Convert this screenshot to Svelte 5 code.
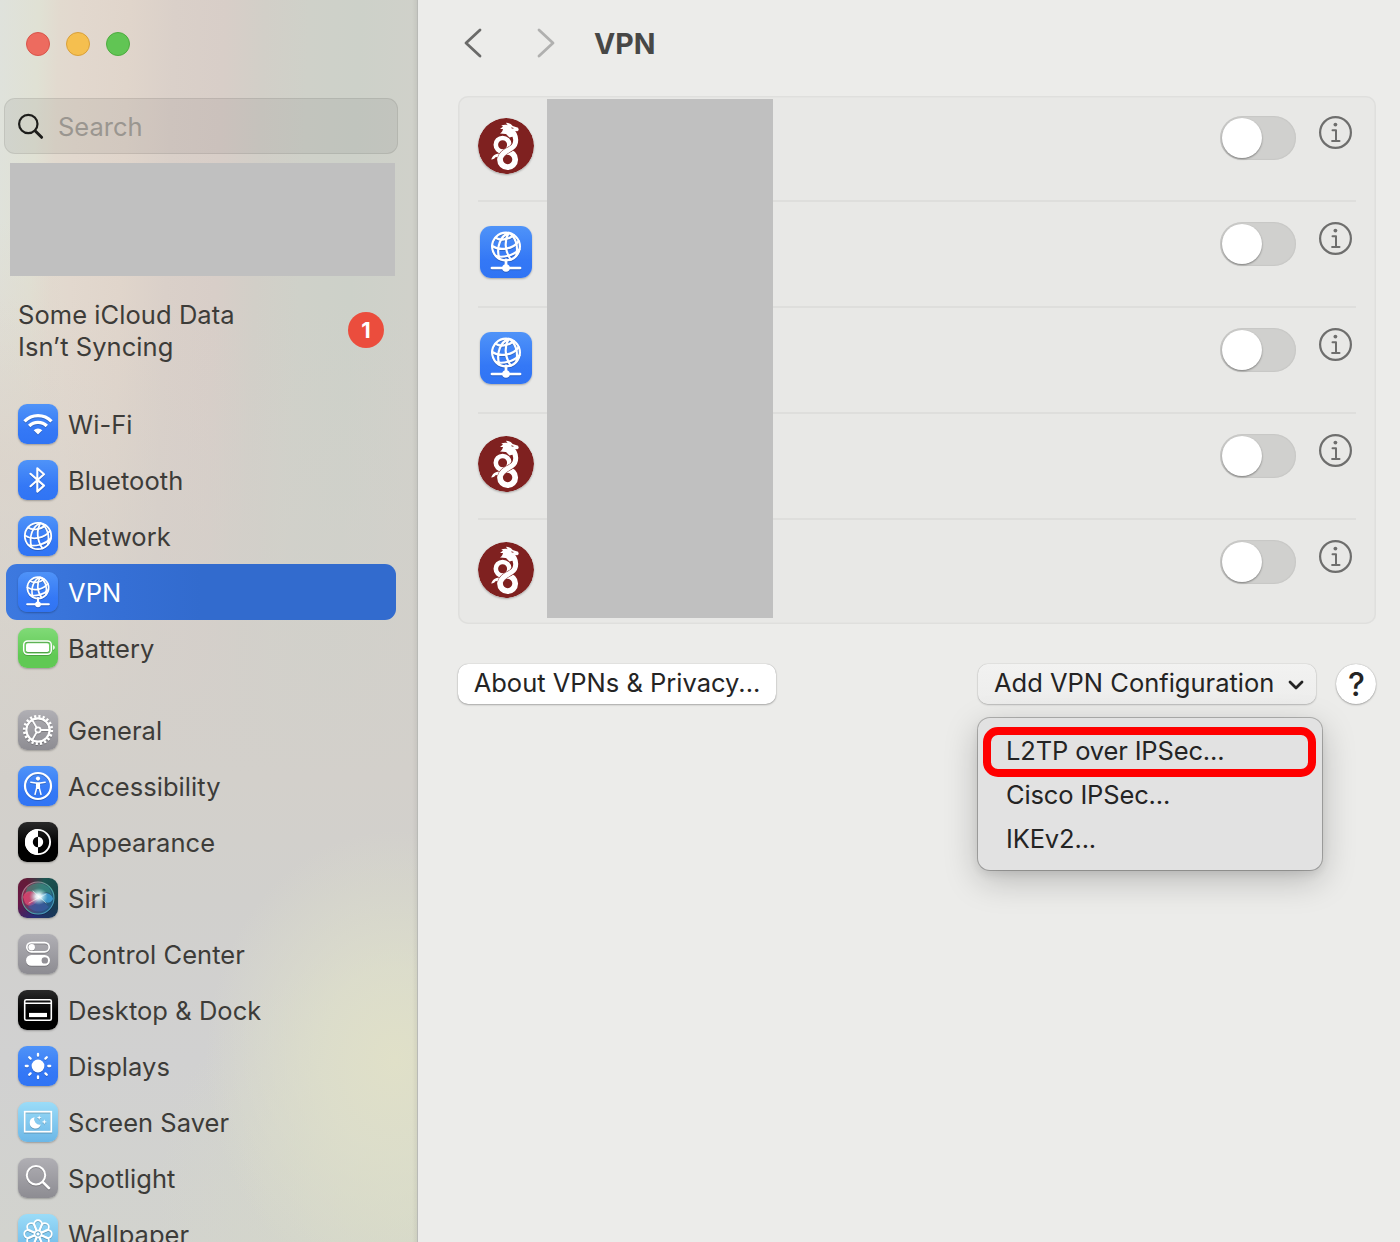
<script>
  const groups = [
    [
      { id: 'wifi', label: 'Wi-Fi', tone: 'blue' },
      { id: 'bluetooth', label: 'Bluetooth', tone: 'blue' },
      { id: 'network', label: 'Network', tone: 'blue' },
      { id: 'vpn', label: 'VPN', tone: 'blue' },
      { id: 'battery', label: 'Battery', tone: 'green' }
    ],
    [
      { id: 'general', label: 'General', tone: 'gray' },
      { id: 'accessibility', label: 'Accessibility', tone: 'blue' },
      { id: 'appearance', label: 'Appearance', tone: 'black' },
      { id: 'siri', label: 'Siri', tone: 'siri' },
      { id: 'control', label: 'Control Center', tone: 'gray' },
      { id: 'desktop', label: 'Desktop & Dock', tone: 'black' },
      { id: 'displays', label: 'Displays', tone: 'blue' },
      { id: 'saver', label: 'Screen Saver', tone: 'sky' },
      { id: 'spotlight', label: 'Spotlight', tone: 'gray' },
      { id: 'wallpaper', label: 'Wallpaper', tone: 'sky' }
    ]
  ];
  let selected = $state('vpn');
  let connections = $state([
    { kind: 'wireguard', on: false },
    { kind: 'vpn', on: false },
    { kind: 'vpn', on: false },
    { kind: 'wireguard', on: false },
    { kind: 'wireguard', on: false }
  ]);
  const options = ['L2TP over IPSec...', 'Cisco IPSec...', 'IKEv2...'];
  const petals = [0, 45, 90, 135, 180, 225, 270, 315];
</script>

{#snippet globe()}
  <circle cx="20" cy="20" r="13.2" />
  <path d="M22.5 7C15 10 10.5 20 13.5 31.2M22.5 7C18.5 14 18.5 24 24.5 32.4M22.5 7C28.5 10 32 19 29.8 28.6" />
  <path d="M10 11.5C14 14.5 22 14 27.5 9.2M6.9 19.5C14 24.5 27 22.5 32 14.8M10.5 29C17 31 27 28.5 32.8 22.5" />
{/snippet}

{#snippet vpnGlyph()}
  <g fill="none" stroke="#fff" stroke-width="2.1" transform="translate(3.8 -.4) scale(.81)">{@render globe()}</g>
  <path d="M20 26v5M9.2 32.3h21.6" fill="none" stroke="#fff" stroke-width="2.1" stroke-linecap="round" />
  <circle cx="20" cy="32.3" r="2.9" fill="#fff" stroke="none" />
{/snippet}

{#snippet glyph(id)}
  <svg viewBox="0 0 40 40" fill="none" stroke="#fff" stroke-linecap="round" stroke-linejoin="round" aria-hidden="true">
    {#if id === 'wifi'}
      <g stroke-width="3.3" stroke-linecap="butt">
        <path d="M6.5 17.3a19 19 0 0 1 27 0M11.2 22a12.3 12.3 0 0 1 17.6 0" />
      </g>
      <path d="M20 30.5l-4.3-4.3a6 6 0 0 1 8.6 0z" fill="#fff" stroke="none" />
    {:else if id === 'bluetooth'}
      <path d="M12.5 13.8L26 25.6 19.3 31.6V8.3L26 14.3 12.5 26.2" stroke-width="2.1" />
    {:else if id === 'network'}
      <g stroke-width="1.8">{@render globe()}</g>
    {:else if id === 'vpn'}
      {@render vpnGlyph()}
    {:else if id === 'battery'}
      <rect x="5.7" y="12.9" width="27.6" height="13.4" rx="4" stroke-width="1.5" />
      <rect x="8" y="15.2" width="23" height="8.8" rx="1.8" fill="#fff" stroke="none" />
      <path d="M35.1 17.3c2.2.6 2.2 4 0 4.6z" fill="#fff" stroke="none" />
    {:else if id === 'general'}
      <circle cx="20" cy="20" r="13.7" stroke-width="2.8" stroke-linecap="butt" stroke-dasharray="2.2 2.1" />
      <circle cx="20" cy="20" r="11.6" stroke-width="2.1" />
      <circle cx="20" cy="20" r="2.6" stroke-width="1.7" />
      <path d="M22.8 20H32M18.6 17.6L14 9.600M18.6 22.4L14 30.4" stroke-width="1.9" />
    {:else if id === 'accessibility'}
      <circle cx="20" cy="20" r="13" stroke-width="2.2" />
      <circle cx="20" cy="12.6" r="2.1" fill="#fff" stroke="none" />
      <path d="M12.8 16.2l5 .8h4.4l5-.8M18.7 17.5v4.5l-1.7 6.5M21.3 17.5v4.5l1.7 6.5" stroke-width="1.5" />
      <path d="M18 17h4v6h-4z" fill="#fff" stroke="none" />
    {:else if id === 'appearance'}
      <circle cx="20" cy="20" r="12.1" stroke-width="1.9" />
      <path d="M20 7a13 13 0 0 0 0 26v-7.8a5.2 5.2 0 0 1 0-10.4zM20 14.8a5.2 5.2 0 0 1 0 10.4z" fill="#fff" stroke="none" />
    {:else if id === 'siri'}
      <defs>
        <radialGradient id="siri-core"><stop offset="0" stop-color="#fff" /><stop offset=".3" stop-color="#e8fbff" stop-opacity=".9" /><stop offset="1" stop-color="#9fdcdf" stop-opacity="0" /></radialGradient>
        <linearGradient id="siri-orb" x1="0" y1=".3" x2="1" y2=".6"><stop offset="0" stop-color="#d3305c" /><stop offset=".45" stop-color="#66728d" /><stop offset="1" stop-color="#2680c2" /></linearGradient>
        <linearGradient id="siri-rim" x1="0" y1="0" x2="1" y2="1"><stop offset="0" stop-color="#cb6686" /><stop offset=".5" stop-color="#4fae9b" /><stop offset="1" stop-color="#448fca" /></linearGradient>
      </defs>
      <circle cx="20" cy="20" r="16" fill="url(#siri-orb)" fill-opacity=".5" stroke="url(#siri-rim)" stroke-width="1.1" />
      <g stroke="none">
        <path d="M9 9.5Q20 1 31 9.5L34 17Q27 10 20 19Q14 10 7 17z" fill="#359b83" opacity=".55" />
        <path d="M5 19C8 11 15 12 22 19 18 26 12 31 7 25z" fill="#ec4a76" opacity=".7" />
        <path d="M21 19C27 12 34 16 35 21 31 28 25 24 21 19z" fill="#40a4dc" opacity=".8" />
        <path d="M10 29Q17 21 22 21L31 29Q21 38 10 29z" fill="#4060b4" opacity=".5" />
        <ellipse cx="20.5" cy="18.500" rx="9.5" ry="8.5" fill="url(#siri-core)" />
      </g>
      <path d="M15 13l13 12M11 25l17-9" stroke="#fff" stroke-opacity=".55" stroke-width=".9" />
    {:else if id === 'control'}
      <rect x="8.8" y="8.6" width="22.4" height="9.2" rx="4.6" stroke-width="1.7" />
      <circle cx="13.7" cy="13.2" r="3.2" fill="#fff" stroke="none" />
      <rect x="8" y="21" width="24" height="10.8" rx="5.4" fill="#fff" stroke="none" />
      <circle cx="26.8" cy="26.4" r="3.2" fill="#929096" stroke="none" />
    {:else if id === 'desktop'}
      <rect x="6.7" y="9.7" width="26.6" height="20.6" rx="1.6" stroke-width="1.6" />
      <path d="M7 13.2h26" stroke-width="1.4" />
      <path d="M11 22.9h18v4.2H11z" fill="#fff" stroke="none" />
    {:else if id === 'displays'}
      <circle cx="20" cy="20" r="6.4" fill="#fff" stroke="none" />
      <path d="M20 7.8v1.9M20 30.3v1.9M7.8 20h1.9M30.3 20h1.9M11.2 11.2l1.4 1.4M27.4 27.4l1.4 1.4M11.2 28.8l1.4-1.4M27.4 12.6l1.4-1.4" stroke-width="2.3" />
    {:else if id === 'saver'}
      <rect x="6.7" y="9.7" width="26.6" height="20" stroke-width="1.7" stroke-linejoin="miter" />
      <path d="M16.5 15.2a5.7 5.7 0 1 0 6.3 7.4 5.6 5.6 0 0 1-6.3-7.4z" fill="#fff" stroke="none" />
      <path d="M21.2 13.3l.6 1.8 1.8.6-1.8.6-.6 1.8-.6-1.8-1.8-.6 1.8-.6zM26.3 17.2l.7 2 2 .7-2 .7-.7 2-.7-2-2-.7 2-.7z" fill="#fff" stroke="none" />
    {:else if id === 'spotlight'}
      <circle cx="18" cy="17.2" r="9.2" stroke-width="2" />
      <path d="M24.9 24.1l6 6" stroke-width="2.6" />
    {:else if id === 'wallpaper'}
      {#each petals as angle}
        <path d="M18.9 16.6L17 12.9A4 4 0 1 1 23 12.9L21.1 16.6" transform="rotate({angle} 20 20)" stroke-width="1.8" />
      {/each}
      <circle cx="20" cy="20" r="3.6" stroke-width="1.3" />
      <circle cx="20" cy="20" r="1.5" fill="#fff" stroke="none" />
    {/if}
  </svg>
{/snippet}

<div class="window">
  <aside>
    <div class="lights"><i class="close"></i><i class="minimize"></i><i class="zoom"></i></div>
    <label class="search">
      <svg viewBox="0 0 28 28" fill="none" stroke="#1d1d1b" stroke-linecap="round"><circle cx="11.3" cy="11" r="9.2" stroke-width="2.2" /><path d="M18.3 18l6.3 6.3" stroke-width="3" /></svg>
      <span>Search</span>
    </label>
    <div class="account"></div>
    <div class="notice"><p>Some iCloud Data<br />Isn’t Syncing</p><b>1</b></div>
    <nav>
      {#each groups as group}
        <ul>
          {#each group as item}
            <li>
              <button class="item" class:selected={selected === item.id} onclick={() => (selected = item.id)}>
                <span class="tile {item.tone}">{@render glyph(item.id)}</span>
                <span>{item.label}</span>
              </button>
            </li>
          {/each}
        </ul>
      {/each}
    </nav>
  </aside>

  <main>
    <header>
      <svg class="back" viewBox="0 0 18 30"><path d="M16 2L2 15l14 13" /></svg>
      <svg class="forward" viewBox="0 0 18 30"><path d="M2 2l14 13L2 28" /></svg>
      <h1>VPN</h1>
    </header>

    <section class="panel">
      {#each connections as c}
        <div class="row">
          {#if c.kind === 'vpn'}
            <span class="service tile blue">{@render glyph('vpn')}</span>
          {:else}
            <svg class="wireguard" viewBox="0 0 56 56">
              <circle cx="28" cy="28" r="28" fill="#7f2120" />
              <g fill="none">
                <circle cx="24.6" cy="26.8" r="6.8" stroke="#fff" stroke-width="4.6" />
                <circle cx="29.6" cy="41.5" r="7.6" stroke="#fff" stroke-width="5.8" />
                <path d="M32 11.5C39.5 18 39.2 26.5 33.4 30.2 28.800 33.200 23.800 34.500 22.200 40" stroke="#7f2120" stroke-width="6" />
                <path d="M32 11C39.500 17.500 39.200 26.500 33.400 30.200 28.800 33.200 23.600 34.500 22 41" stroke="#fff" stroke-width="5" />
              </g>
              <path d="M22 15.500c2-1.200 2.600-2.600 3-4.400l-3-.1 3-2.400-1.800-1c2.500-.9 4.700-.9 6.500-.4l-1.800-2.400c3 .1 5.300 1.200 6.800 3.300l5.400 1.700.7 2.200-1.400 1.200-5-.5-.7 1.200 3.300 4-5.500 1.500-3.500-3.400c-2 .1-4.200-.6-6-.5z" fill="#fff" />
              <path d="M13.200 41.500c1.700-4.200 4.200-5.600 7.800-5.900l-1.500 3.600-1.800-.3c-.8 1.500-2.200 2.400-4.500 2.600z" fill="#fff" />
              <path d="M33.400 9.800l2 .6" stroke="#7f2120" stroke-width=".9" />
            </svg>
          {/if}
          <button class="switch" class:on={c.on} aria-label="Toggle connection" onclick={() => (c.on = !c.on)}><i></i></button>
          <svg class="info" viewBox="0 0 34 34" fill="none" stroke="#6e6e6d">
            <circle cx="16.5" cy="16.5" r="15.4" stroke-width="2.2" />
            <circle cx="16.4" cy="8.6" r="1.9" fill="#6e6e6d" stroke="none" />
            <path d="M13.5 14.2h3.5v10.8M13.1 25h7.4" stroke-width="2" stroke-linecap="round" stroke-linejoin="round" />
          </svg>
        </div>
      {/each}
      <div class="redacted"></div>
    </section>

    <div class="actions">
      <button class="about">About VPNs &amp; Privacy...</button>
      <div class="add-wrap">
        <button class="add">Add VPN Configuration
          <svg viewBox="0 0 16 10"><path d="M2 2l6 6 6-6" /></svg>
        </button>
        <div class="menu">
          {#each options as option, i}
            <div class="option" class:highlighted={i === 0}>{option}</div>
          {/each}
        </div>
      </div>
      <button class="help">?</button>
    </div>
  </main>
</div>

<style>
  :global(body) { margin: 0; overflow: hidden; }
  .window {
    display: flex; width: 1400px; height: 1242px; overflow: hidden;
    background: #ececea; color: #242424;
    font: 430 25.5px/32px Inter, "Liberation Sans", sans-serif;
  }
  button { border: 0; padding: 0; margin: 0; font: inherit; color: inherit; background: none; }
  aside {
    box-sizing: border-box; flex: none; width: 418px; height: 1242px; overflow: hidden;
    padding: 32px 19px 0 4px; border-right: 1px solid #b9bab6; color: #3d3c39;
    background:
      linear-gradient(90deg, transparent 412px, #0000000d 417px),
      radial-gradient(ellipse 190px 230px at 395px 1060px, #e0e0c8 0, #dedfcacc 40%, #d8d9cd00 100%),
      radial-gradient(ellipse 260px 260px at 417px 1200px, #d6d9c8 0, #d5d7ca00 100%),
      linear-gradient(180deg, transparent 300px, #d3d0cb 780px, #d1d0cd 900px, #d1d1d1 1060px, #d2d3ce 1242px),
      linear-gradient(180deg, transparent 220px, #e0d7cd 460px, #dacfc900 1242px) 0 0 / 60px 100% no-repeat,
      linear-gradient(92deg, #dfe2dc 0, #e0e1d4 40px, #e2dacf 60px, #e2d8ce 80px, #e0d5cb 130px, #dad0c9 175px, #d8cec8 225px, #d2cfc8 265px, #cfd1c9 310px, #cdd1c9 360px, #d0d1ca 420px);
  }
  .lights { display: flex; gap: 16px; padding-left: 22px; }
  .lights i { box-sizing: border-box; width: 24px; height: 24px; border-radius: 50%; border: 1px solid; }
  .lights .close { background: #ed6b5f; border-color: #d9544a; }
  .lights .minimize { background: #f5bf4f; border-color: #d9a03a; }
  .lights .zoom { background: #61c554; border-color: #4dac3f; }
  .search {
    box-sizing: border-box; display: flex; align-items: center; gap: 13px; width: 394px; height: 56px;
    margin-top: 42px; padding: 2px 0 0 12px; border: 1px solid #00000014; border-radius: 11px;
    background: #0000000f; color: #9a9690;
  }
  .search svg { width: 28px; height: 28px; }
  .account { width: 385px; height: 113px; margin: 9px 0 0 6px; background: #c0c0c0; }
  .notice { display: flex; align-items: center; justify-content: space-between; height: 64px; margin: 22px 14px 0 14px; }
  .notice p { margin: 0; padding-top: 2px; letter-spacing: .06px; }
  .notice b {
    width: 36px; height: 36px; border-radius: 50%; background: #eb4d3d; color: #fff;
    font-size: 22px; line-height: 36px; font-weight: 650; text-align: center;
  }
  nav { display: flex; flex-direction: column; gap: 26px; margin-top: 34px; padding-left: 2px; }
  ul { list-style: none; margin: 0; padding: 0; }
  .item { display: flex; align-items: center; gap: 10px; width: 390px; height: 56px; padding: 0 12px; border-radius: 11px; text-align: left; white-space: nowrap; letter-spacing: .04px; }
  .item > span:last-child { padding-top: 2px; }
  .selected { color: #fff; background: linear-gradient(90deg, #3d79df, #356fd5 30%, #326bce 50%); }
  .tile { flex: none; width: 40px; height: 40px; border-radius: 9px; box-shadow: 0 1px 2px #0004; }
  .tile svg { display: block; width: 100%; height: 100%; filter: drop-shadow(0 1px .5px #0003); }
  .blue { background: linear-gradient(#4f93f8, #3478f6 65%, #3074f4); }
  .green { background: linear-gradient(#80da77, #60c954 70%); }
  .gray { background: linear-gradient(#b0afb4, #8d8c92); }
  .black { background: linear-gradient(#2a2a2a, #000 55%); }
  .sky { background: linear-gradient(#9bdcf8, #6cb7e7); }
  .siri { background: conic-gradient(from 20deg, #1c5551, #174046 20%, #19365d 35%, #262c78 48%, #681746 65%, #641b38 85%, #1c5551); }

  main { flex: 1; box-sizing: border-box; padding: 0 24px 0 40px; }
  header { display: flex; align-items: center; height: 86px; padding-left: 6px; }
  header svg { width: 18px; height: 30px; fill: none; stroke: #6a6a69; stroke-width: 2.8; stroke-linecap: round; stroke-linejoin: round; }
  header .forward { margin-left: 55px; stroke: #b0b0af; }
  h1 { margin: 1px 0 0 39px; font-size: 28.5px; line-height: 36px; font-weight: 700; color: #474746; }
  .panel {
    position: relative; box-sizing: border-box; height: 528px; margin-top: 10px; padding: 0 20px;
    border-radius: 10px; background: #e8e8e6; box-shadow: inset 0 0 0 1.5px #dfdfdd;
  }
  .row { box-sizing: border-box; display: flex; align-items: flex-start; height: 106px; padding: 20px 3px 0 0; border-bottom: 2px solid #dededc; }
  .row:nth-child(5) { height: 104px; border: 0; }
  .wireguard { width: 56px; height: 56px; margin-top: 2px; border-radius: 50%; box-shadow: 0 1px 2px #0004; }
  .service { width: 52px; height: 52px; margin: 4px 2px 0; border-radius: 11px; }
  .switch { box-sizing: border-box; display: flex; width: 76px; height: 44px; margin-left: auto; padding: 2px; border-radius: 22px; background: #d0d0ce; box-shadow: inset 0 0 2px #0002; }
  .switch i { width: 40px; height: 40px; border-radius: 50%; background: #fff; box-shadow: 0 1px 2px #0006; }
  .switch.on { justify-content: flex-end; background: #3478f6; }
  .info { width: 34px; height: 34px; margin-left: 23px; }
  .redacted { position: absolute; left: 89px; top: 3px; width: 226px; height: 519px; background: #c0c0c0; }

  .actions { display: flex; margin-top: 40px; color: #242424; }
  .about, .add { height: 40px; border-radius: 10px; line-height: 38px; white-space: nowrap; padding: 0 0 2px; }
  .about { width: 318px; background: #fff; box-shadow: 0 0 1px #0005, 0 1px 2px #0004; }
  .add-wrap { position: relative; margin-left: auto; }
  .add {
    display: flex; align-items: center; justify-content: space-between; box-sizing: border-box; width: 338px; padding: 0 12px 2px 16px;
    background: linear-gradient(#f2f2f1, #ededec); box-shadow: 0 0 1px #0006, 0 1px 2px #0003;
  }
  .add svg { width: 16px; height: 10px; margin-top: 4px; fill: none; stroke: #242424; stroke-width: 2.8; stroke-linecap: round; stroke-linejoin: round; }
  .menu {
    position: absolute; left: 0; top: 54px; box-sizing: border-box; width: 344px; height: 152px; padding: 11px 7px;
    border-radius: 12px; background: #e2e2e2; box-shadow: 0 0 0 1px #0000003d, 0 10px 34px #00000038, 0 4px 10px #00000014;
    letter-spacing: -.15px;
  }
  .option { position: relative; height: 44px; padding-left: 21px; line-height: 44px; white-space: nowrap; }
  .highlighted::after { content: ""; position: absolute; left: -2px; top: -2px; box-sizing: border-box; width: 333px; height: 50px; border: 8px solid #f00; border-radius: 15px; }
  .help { width: 40px; height: 40px; margin-left: 20px; padding: 1px 0 0 1px; border-radius: 50%; background: #fff; box-shadow: 0 0 1px #0005, 0 1px 2px #0004; font-size: 32px; font-weight: 500; line-height: 40px; }
</style>
